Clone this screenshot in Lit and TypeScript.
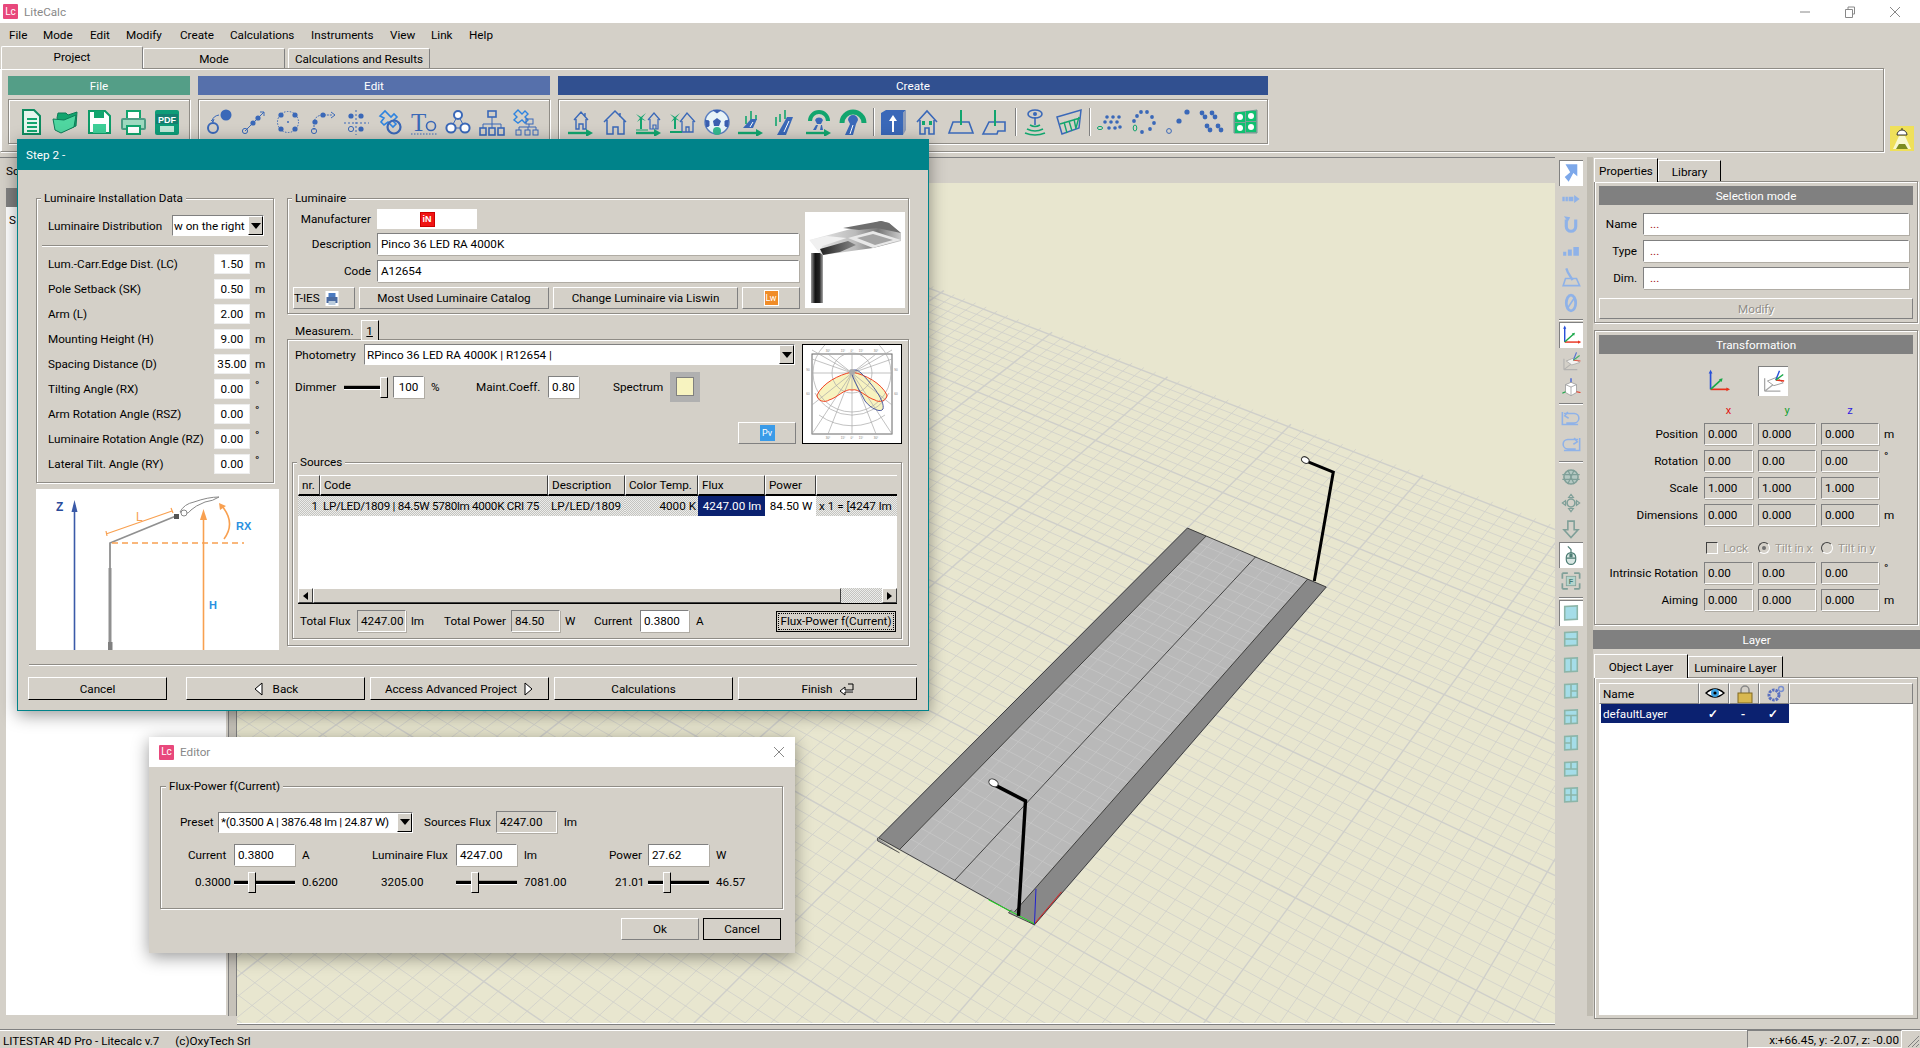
import { LitElement, html, css, svg } from "lit";
import { customElement } from "lit/decorators.js";

const B = "#3a68b8", G = "#12a56e", LB = "#8fb2e8", GY = "#7f9f98";

const H = (() => {
  const [Ax, Ay, Bx, By, Cx, Cy, Dx, Dy] = [879, 838, 1035, 925, 1327, 587, 1188, 528];
  const dx1 = Bx - Cx, dx2 = Dx - Cx, sx = Ax - Bx + Cx - Dx, dy1 = By - Cy, dy2 = Dy - Cy, sy = Ay - By + Cy - Dy;
  const den = dx1 * dy2 - dx2 * dy1;
  const g = (sx * dy2 - dx2 * sy) / den, h = (dx1 * sy - sx * dy1) / den;
  const a = Bx - Ax + g * Bx, b = Dx - Ax + h * Dx, d = By - Ay + g * By, e = Dy - Ay + h * Dy;
  return (u: number, v: number) => {
    const w = g * u + h * v + 1;
    return [(a * u + b * v + Ax) / w, (d * u + e * v + Ay) / w];
  };
})();
const pt = (u: number, v: number) => H(u, v).map((n) => n.toFixed(1)).join(",");
const poly = (pts: number[][]) => pts.map(([u, v]) => pt(u, v)).join(" ");
const VMAX = 1.44, VMIN = -1.3;
const gridLines = (() => {
  const out: any[] = [];
  for (let i = -90; i <= 110; i++) {
    const u = i / 10;
    const [x1, y1] = H(u, VMIN), [x2, y2] = H(u, VMAX);
    out.push(svg`<line x1=${x1} y1=${y1} x2=${x2} y2=${y2} stroke-width=${i % 10 === 0 ? 1.4 : 0.8}/>`);
  }
  for (let i = -46; i <= 50; i++) {
    const v = i / 35;
    const [x1, y1] = H(-9, v), [x2, y2] = H(11, v);
    out.push(svg`<line x1=${x1} y1=${y1} x2=${x2} y2=${y2} stroke-width=${i % 10 === 0 ? 1.4 : 0.8}/>`);
  }
  return out;
})();
const roadGrid = (() => {
  const out: any[] = [];
  for (let i = 2; i < 9; i++) {
    const [x1, y1] = H(i / 10, 0), [x2, y2] = H(i / 10, 1);
    out.push(svg`<line x1=${x1} y1=${y1} x2=${x2} y2=${y2}/>`);
  }
  for (let i = 1; i < 35; i++) {
    const [x1, y1] = H(0.14, i / 35), [x2, y2] = H(0.87, i / 35);
    out.push(svg`<line x1=${x1} y1=${y1} x2=${x2} y2=${y2}/>`);
  }
  return out;
})();

const ic = (body: any) => html`<svg class="ic" viewBox="0 0 28 28">${body}</svg>`;
const ringDots = (pts: number[][], r = 2.4, c = B) => pts.map(([x, y]) => svg`<circle cx=${x} cy=${y} r=${r} fill=${c}/>`);
const arrowG = svg`<path d="M1 25h20" stroke=${G} stroke-width="2.4" fill="none"/><path d="M19 21l7 4-7 4z" fill=${G}/>`;
const houseP = "M7 12L14 4l7 8M9 11v10h3v-5h4v5h3V11M18 5v3";
const palm = svg`<path d="M6 9v12" stroke=${G} stroke-width="2"/><path d="M1 6l5 3 5-4-4 5 4 3-5-2-4 3 3-4z" fill=${G}/>`;
const tunnel = svg`<path d="M5 13a9 9 0 1 1 18 0" fill="none" stroke=${G} stroke-width="4"/><path d="M10 12a4.5 4.5 0 0 1 8 0l-2 4h-4z" fill=${B}/>`;

const fileIcons = [
  ic(svg`<path d="M6 2h11l6 6v18H6z" fill="#e6f6ee" stroke="#0e8c60" stroke-width="2"/><path d="M10 11h10M10 15h10M10 19h10M10 23h10" stroke=${G} stroke-width="2"/>`),
  ic(svg`<path d="M6 10l1-5 8 0 2 2 9-3-1 14-15 6z" fill=${G} stroke="#0e7c58"/><path d="M2 11l11 1 12-5-2 12-13 6-6-3z" fill="#4fd6a0" stroke="#0e7c58"/>`),
  ic(svg`<path d="M4 3h16l5 5v17H4z" fill="#fff" stroke="#0e9c68" stroke-width="2"/><rect x="9" y="3" width="10" height="7" fill=${G}/><rect x="8" y="16" width="13" height="9" fill="#3ecf98"/>`),
  ic(svg`<rect x="8" y="3" width="13" height="8" fill="#fff" stroke=${G} stroke-width="2"/><rect x="3" y="11" width="23" height="10" rx="1" fill="#9dd9bf" stroke="#4d9d84" stroke-width="2"/><rect x="8" y="18" width="13" height="8" fill="#fff" stroke=${G} stroke-width="2"/>`),
  ic(svg`<rect x="2" y="2" width="24" height="25" rx="2" fill="#0e9c78"/><rect x="3" y="6" width="22" height="10" fill="#157e70"/><text x="14" y="14.5" font-size="9" font-weight="700" font-family="Liberation Sans" fill="#fff" text-anchor="middle">PDF</text><rect x="7" y="18" width="14" height="6" fill="#bfe8d8"/>`),
];
const editIcons = [
  ic(svg`<circle cx="20" cy="7" r="5.5" fill=${B}/><circle cx="7" cy="20" r="5" fill="none" stroke=${B} stroke-width="2"/><path d="M6 13q1-5 7-6M5 12l2 2 1-3" fill="none" stroke=${B}/>`),
  ic(svg`<path d="M5 23L24 4" stroke=${B}/>${ringDots([[13, 15], [18, 10]], 2.6)}<circle cx="5" cy="23" r="2.6" fill="none" stroke=${B}/><path d="M20 4h4v4" stroke="${B}" fill="none"/>`),
  ic(svg`<circle cx="14" cy="14" r="10.5" fill="none" stroke=${B} stroke-dasharray="1.5 1.5"/>${ringDots([[7, 7], [21, 7], [21, 21], [7, 21]], 2.6)}<circle cx="14" cy="14" r="1" fill=${B}/>`),
  ic(svg`<path d="M6 22v-6q0-8 8-9h10" fill="none" stroke=${B} stroke-dasharray="2 1"/>${ringDots([[7, 14], [15, 7]], 2.6)}<circle cx="6" cy="23" r="2.6" fill="none" stroke=${B}/><path d="M23 4l4 3-4 3" fill="none" stroke=${B}/>`),
  ic(svg`<path d="M14 2v25M2 15h25" stroke=${B} stroke-dasharray="2 2"/>${ringDots([[9, 8], [19, 8], [19, 21]], 2.6)}<circle cx="9" cy="21" r="2.6" fill="none" stroke=${B}/>`),
  ic(svg`<path d="M4 8l5-5 6 6 3-3 3 3-4 4 3 3-3 3-5-5-4 3-3-3 3-4z" fill="none" stroke="#2e84e0" stroke-width="1.6"/><circle cx="18" cy="19" r="6.5" fill="none" stroke=${B} stroke-width="2.2"/>`),
  ic(svg`<text x="1" y="23" font-size="25" font-family="Liberation Serif" fill=${B}>T</text><circle cx="21" cy="18" r="4.5" fill="none" stroke=${B} stroke-width="1.6"/><path d="M1 26h26" stroke=${B} stroke-dasharray="1.5 1.5"/>`),
  ic(svg`<path d="M14 7L7 20h14z" fill="none" stroke=${B}/><circle cx="14" cy="7" r="4" fill="#fff" stroke=${B} stroke-width="2"/><circle cx="7" cy="20" r="4.6" fill="#fff" stroke=${B} stroke-width="2"/><circle cx="21" cy="20" r="4.6" fill="#fff" stroke=${B} stroke-width="2"/>`),
  ic(svg`<path d="M14 9v6M5 20v-4h18v4M14 15v5" stroke=${B} fill="none"/><rect x="10" y="3" width="8" height="6" fill="none" stroke=${B} stroke-width="1.6"/><rect x="2" y="20" width="6" height="7" fill="none" stroke=${B} stroke-width="1.6"/><rect x="11" y="20" width="6" height="7" fill="none" stroke=${B} stroke-width="1.6"/><rect x="20" y="20" width="6" height="7" fill="none" stroke=${B} stroke-width="1.6"/>`),
  ic(svg`<path d="M2 6l4-4 4 4 3-3 3 3-3 3 3 3-3 3-3-3-4 3-4-3 3-3z" fill="none" stroke="#2e84e0" stroke-width="1.4"/><rect x="14" y="11" width="7" height="5" fill="none" stroke=${B}/><path d="M17 16v3M7 22v-3h17v3M16 19v3" stroke=${B} fill="none"/><rect x="4" y="22" width="5" height="5" fill="none" stroke=${B}/><rect x="13" y="22" width="5" height="5" fill="none" stroke=${B}/><rect x="21" y="22" width="5" height="5" fill="none" stroke=${B}/>`),
];
const createIcons = [
  ic(svg`<path d=${houseP} fill="none" stroke=${B} stroke-width="1.4"/>${arrowG}`),
  ic(svg`<path d="M3 14L14 3l11 11M6 12v14h6v-7h5v7h6V12M19 5v4" fill="none" stroke=${B} stroke-width="1.5"/>`),
  ic(svg`${palm}<path d="M13 12l6-7 6 7M15 11v10h8V11M18 21v-4h3v4" fill="none" stroke=${B} stroke-width="1.2"/><path d="M1 22h12" stroke=${G}/>${arrowG}`),
  ic(svg`${palm}<path d="M11 14l7-9 8 9M13 13v11h11V13M17 24v-5h3v5" fill="none" stroke=${B} stroke-width="1.3"/><path d="M1 24h12" stroke=${G} stroke-width="2"/>`),
  ic(svg`<circle cx="14" cy="14" r="12" fill="#e8f4f8" stroke="#5a7fc0" stroke-width="1.5"/><path d="M14 10l4 3-2 5h-5l-1-5z" fill="#3a5fb0"/><path d="M10 2l4 3 4-3M2 12l4 1 0 5-3 1M26 12l-4 1 0 5 3 1" fill="#3a5fb0" stroke="#3a5fb0"/><circle cx="14" cy="23" r="4" fill="#35b890"/>`),
  ic(svg`<path d="M9 8v8M14 3v11M19 7v5" stroke=${G} stroke-width="1.6" fill="none"/><path d="M6 20l8-9h6l-4 9z" fill=${B}/><path d="M13 19l3-5" stroke="#fff"/>${arrowG}`),
  ic(svg`<path d="M5 9v9M9 6v8M14 2v9" stroke=${G} stroke-width="1.6" fill="none"/><path d="M16 9h6l-7 18H6z" fill=${B}/><path d="M13 24l5-11" stroke="#fff"/>`),
  ic(svg`${tunnel}<path d="M8 22l3-5h2l-2 5zM15 22l1-5h1l1 5" fill=${B}/>${arrowG}`),
  ic(svg`<path d="M3 15a11 11 0 1 1 22 0" fill="none" stroke=${G} stroke-width="5"/><path d="M9 12a5 5 0 0 1 10 0l-2 4-3 11H6l5-11z" fill=${B}/><path d="M11 26l3-9" stroke="#fff"/>`),
  ic(svg`<path d="M2 5l5-3h20l-3 3v22H2z" fill=${B}/><path d="M24 5l3-3v20l-3 5z" fill="#8c9bb8"/><path d="M13 24v-11h-3l4-6 4 6h-3v11z" fill="#fff"/>`),
  ic(svg`<path d="M4 14L14 3l10 11M7 12v14h5v-6h4v6h5V12" fill="none" stroke=${B} stroke-width="1.6"/><rect x="9" y="13" width="3" height="4" fill=${G}/><rect x="16" y="13" width="3" height="4" fill=${G}/>`),
  ic(svg`<path d="M6 14h16l4 11H2z" fill="none" stroke=${B} stroke-width="1.6"/><path d="M14 2v15" stroke=${G} stroke-width="2"/>`),
  ic(svg`<path d="M8 14h16v9h-7l-1 3H2z" fill="none" stroke=${B} stroke-width="1.6"/><path d="M14 2v16" stroke=${G} stroke-width="2"/>`),
  ic(svg`<ellipse cx="14" cy="6" rx="7" ry="4" fill="none" stroke=${B} stroke-width="1.6"/><circle cx="14" cy="6" r="2" fill=${B}/><path d="M14 9v8" stroke=${B} stroke-width="1.6"/><path d="M9 17q5 3 10 0M6 21q8 4 16 0M4 25q10 4 20 0" fill="none" stroke=${G} stroke-width="1.6"/>`),
  ic(svg`<path d="M2 9L26 2l-2 18-17 6z" fill="none" stroke=${B} stroke-width="1.5"/><path d="M5 16l20-6M9 14l3 11M14 13l3 10M19 11l2 10M24 9l-3 11" stroke=${G} stroke-width="1.4"/>`),
  ic(svg`${ringDots([[12, 9], [18, 9], [24, 9], [10, 14], [16, 14], [22, 14], [14, 20], [20, 20], [25, 19]], 1.8)}<ellipse cx="5" cy="20" rx="2.6" ry="1.6" fill="none" stroke=${G}/>`),
  ic(svg`${ringDots([[12, 4], [18, 4], [8, 8], [23, 9], [5, 13], [25, 15], [21, 21], [13, 24]], 1.9)}<ellipse cx="6" cy="20" rx="1.8" ry="3" fill="none" stroke=${G}/>`),
  ic(svg`${ringDots([[24, 4], [16, 13]], 2.6)}<circle cx="6" cy="23" r="2.4" fill="none" stroke=${B}/>`),
  ic(svg`${ringDots([[5, 5], [8, 9], [15, 5], [18, 9], [10, 18], [13, 22], [21, 18], [24, 22]], 2.4)}`),
  ic(svg`<path d="M3 5l23-3v23H3z" fill=${GY} stroke="#6a9d90"/>${[[9, 9], [20, 8], [9, 20], [20, 19]].map(([x, y]) => svg`<rect x=${x - 5} y=${y - 5} width="10" height="10" fill="#10c070"/><circle cx=${x} cy=${y} r="3" fill="#fff"/>`)}`),
];
const axes = svg`<path d="M6 23V5" stroke="#2850d8" stroke-width="1.8"/><path d="M4 6l2-4 2 4z" fill="#2850d8"/><path d="M6 23h18" stroke="#e8301c" stroke-width="1.8"/><path d="M23 21l4 2-4 2z" fill="#e8301c"/><path d="M6 23l11-10" stroke="#18a848" stroke-width="1.8"/><path d="M15 12l4-1-1 4z" fill="#18a848"/>`;
const axes2 = svg`<path d="M5 25V11M5 25h17M5 25l9-7" stroke="#a8a8a8" stroke-width="1.4" fill="none"/><path d="M8 14l10-4 7 6-10 3z" fill="#fff" stroke="#999"/><path d="M17 13L21 3" stroke="#2850d8" stroke-width="1.5"/><path d="M17 13l9 1" stroke="#e8301c" stroke-width="1.5"/><path d="M17 13l8-6" stroke="#18a848" stroke-width="1.5"/>`;
const split = (s: string) => ic(svg`<rect x="6" y="5" width="16" height="17" fill="#a5dde8" stroke="#8cb5a8" stroke-width="2" transform="skewY(-3) translate(0 1)"/><path d=${s} stroke="#8cb5a8" stroke-width="2" fill="none"/>`);
const vtool: any[] = [
  [ic(svg`<path d="M6 3h15v15l-5-4-6 11-5-6 7-6z" fill="#7da8ea" transform="translate(1 0)"/>`), true],
  [ic(svg`<path d="M3 11h3v6H3zM7 11h3v6H7zM11 11h6v6h-6zM18 9l7 5-7 5z" fill=${LB}/>`)],
  [ic(svg`<path d="M8 7v9a6 6 0 0 0 12 0V7" fill="none" stroke=${LB} stroke-width="4"/><path d="M5 3l8 1-3 6z" fill=${LB}/>`)],
  [ic(svg`<path d="M4 15h4v5H4zM10 12h5v8h-5zM17 9h7v11h-7z" fill=${LB}/>`)],
  [ic(svg`<path d="M8 3l2 5 6 10" stroke=${LB} stroke-width="3" fill="none"/><path d="M7 16h14l4 9H4z" fill="none" stroke=${LB} stroke-width="2"/>`)],
  [ic(svg`<ellipse cx="14" cy="14" rx="6" ry="10" fill="none" stroke=${LB} stroke-width="3.5"/><path d="M10 20l8-12" stroke=${LB} stroke-width="2"/>`)],
  "sep",
  [ic(axes), true],
  [ic(svg`<g opacity=".75">${axes2}</g>`)],
  [ic(svg`<path d="M14 3v6" stroke="#2850d8" stroke-width="1.5"/><path d="M7 11l7-3 7 3v10l-7 4-7-4z" fill="#fff" stroke="#999"/><path d="M7 11l7 3 7-3M14 14v11" stroke="#999" fill="none"/><path d="M21 20l5 1" stroke="#e8301c" stroke-width="1.5"/><path d="M7 20l-4 2" stroke="#18a848" stroke-width="1.5"/>`)],
  "sep",
  [ic(svg`<path d="M5 7h13a6 6 0 0 1 0 12H8M3 5v16h20" fill="none" stroke=${LB} stroke-width="2"/><path d="M10 5l-4 5 5 3" fill="none" stroke=${LB} stroke-width="2"/>`)],
  [ic(svg`<path d="M23 7H10a6 6 0 0 0 0 12h10M25 5v16H5" fill="none" stroke=${LB} stroke-width="2"/><path d="M18 5l4 5-5 3" fill="none" stroke=${LB} stroke-width="2"/>`)],
  "sep",
  [ic(svg`<circle cx="14" cy="14" r="9" fill="#b4c8c2" stroke=${GY} stroke-width="2"/><path d="M3 11h22M3 17h22M10 5l8 18M18 5l-8 18" stroke=${GY} stroke-width="1.6"/>`)],
  [ic(svg`<circle cx="14" cy="14" r="5" fill="none" stroke=${GY} stroke-width="2"/><path d="M14 3l3 4h-6zM14 25l3-4h-6zM3 14l4-3v6zM25 14l-4-3v6z" fill="none" stroke=${GY} stroke-width="1.5"/>`)],
  [ic(svg`<path d="M10 4h8v11h5L14 25 5 15h5z" fill="none" stroke=${GY} stroke-width="2"/>`)],
  [ic(svg`<rect x="8" y="11" width="12" height="15" rx="6" fill="#d8e6e2" stroke="#4d7d74" stroke-width="1.5"/><path d="M8 18h12M14 11V7L10 3" stroke="#4d7d74" fill="none" stroke-width="1.5"/><rect x="12" y="12" width="4" height="5" fill="#4d7d74"/>`), true],
  [ic(svg`<path d="M3 4h7M3 4v7M25 4h-7M25 4v7M3 24h7M3 24v-7M25 24h-7M25 24v-7" stroke=${GY} stroke-width="2.2"/><rect x="8" y="8" width="12" height="12" fill="#b4d4cc" stroke=${GY}/><text x="14" y="18" font-size="9" font-weight="700" font-family="Liberation Sans" fill="#4d7d74" text-anchor="middle">F</text>`)],
  "sep",
  [split(""), true],
  [split("M6 14h16")],
  [split("M14 6v16")],
  [split("M14 6v16M14 14h8")],
  [split("M6 12h16M14 12v10")],
  [split("M14 6v16M6 14h8")],
  [split("M6 14h16M14 6v8")],
  [split("M14 6v16M6 14h16")],
];

const logo = html`<span class="lc">Lc</span>`;

const instRows: [string, string, string][] = [
  ["Lum.-Carr.Edge Dist. (LC)", "1.50", "m"], ["Pole Setback (SK)", "0.50", "m"], ["Arm (L)", "2.00", "m"],
  ["Mounting Height (H)", "9.00", "m"], ["Spacing Distance (D)", "35.00", "m"], ["Tilting Angle (RX)", "0.00", "°"],
  ["Arm Rotation Angle (RSZ)", "0.00", "°"], ["Luminaire Rotation Angle (RZ)", "0.00", "°"], ["Lateral Tilt. Angle (RY)", "0.00", "°"],
];
const transRows: [string, string[], string][] = [
  ["Position", ["0.000", "0.000", "0.000"], "m"], ["Rotation", ["0.00", "0.00", "0.00"], "°"],
  ["Scale", ["1.000", "1.000", "1.000"], ""], ["Dimensions", ["0.000", "0.000", "0.000"], "m"],
];
const menus: [string, number][] = [["File", 34], ["Mode", 47], ["Edit", 36], ["Modify", 54], ["Create", 50], ["Calculations", 81], ["Instruments", 79], ["View", 41], ["Link", 38], ["Help", 40]];

@customElement("app-root")
export class AppRoot extends LitElement {
  static styles = css`
    :host { display: block; position: relative; width: 1920px; height: 1048px; overflow: hidden; background: #d4d0c8; font: 11.7px/16px "Roboto", "Liberation Sans", sans-serif; color: #000; }
    * { box-sizing: border-box; }
    .app { display: flex; flex-direction: column; height: 1048px; }
    .title { height: 23px; background: #fff; display: flex; align-items: center; padding: 0 3px 0 3px; color: #888; gap: 6px; flex: none; }
    .lc { display: inline-flex; width: 15px; height: 15px; background: #e8487c; color: #fff; font-size: 10px; align-items: center; justify-content: center; border-radius: 1px; flex: none; }
    .grow { flex: 1; }
    .title .winbtn { width: 45px; margin-left: -6px; height: 23px; display: flex; align-items: center; justify-content: center; }
    .winbtn svg { width: 12px; height: 12px; }
    .menu { height: 23px; display: flex; align-items: center; padding-left: 9px; flex: none; }
    .menu span { flex: none; }
    .tabs { height: 22px; display: flex; padding-left: 1px; align-items: flex-end; flex: none; position: relative; z-index: 1; }
    .tab { width: 142px; height: 20px; border: 1px solid #fff; border-right-color: #808080; border-bottom: 0; display: flex; align-items: center; justify-content: center; border-radius: 2px 2px 0 0; }
    .tab.on { height: 23px; margin-bottom: -1px; background: #d4d0c8; padding-bottom: 2px; }
    .tab.c { width: 142px; margin-left: 3px; }
    .top { height: 84px; flex: none; display: flex; }
    .ribbon { width: 1884px; border: 1px solid #8f8c86; box-shadow: inset 1px 1px 0 #fff, 1px 1px 0 #fff; border-left-color: #fff; display: flex; padding: 7px 0 0 7px; gap: 8px; }
    .rgroup { display: flex; flex-direction: column; gap: 4px; }
    .rhead { height: 19px; color: #fff; display: flex; align-items: center; justify-content: center; flex: none; }
    .rbox { height: 45px; border: 1px solid #8f8c86; box-shadow: inset 1px 1px 0 #fff, 1px 1px 0 #fff; display: flex; align-items: center; }
    .ic { width: 28px; height: 28px; display: block; }
    .cell34 { width: 34px; display: flex; justify-content: center; flex: none; }
    .vsep { width: 6px; height: 28px; flex: none; display: flex; justify-content: center; }
    .vsep::before { content: ""; width: 1px; background: #808080; box-shadow: 1px 0 #fff; }
    .lamp { width: 24px; height: 25px; margin: 58px 0 0 6px; background: #efe05a; display: flex; align-items: center; justify-content: center; }
    .lamp svg { width: 22px; height: 24px; }
    .work { flex: 1; display: flex; margin-top: 5px; min-height: 0; }
    .left { width: 228px; display: flex; flex-direction: column; padding: 0 2px 8px 6px; }
    .ltab { height: 26px; margin-left: -6px; padding: 5px 0 0 6px; border-top: 1px solid #808080; width: 60px; }
    .lbar { height: 19px; margin-top: 5px; background: #808080; flex: none; }
    .lwhite { flex: 1; background: #fff; padding: 5px 3px; }
    .splitter { width: 9px; margin-bottom: 7px; border-left: 1px solid #808080; border-right: 1px solid #808080; background: #c6c2b9; }
    .center { width: 1319px; display: flex; flex-direction: column; margin-right: 3px; }
    .chead { height: 26px; border-top: 1px solid #808080; flex: none; }
    .canvas { height: 840px; background: #e8e6cf; position: relative; overflow: hidden; box-shadow: 0 1px 0 #fff, 0 2px 0 #808080; }
    .canvas svg { position: absolute; inset: 0; width: 100%; height: 100%; }
    .gl line { stroke: #cfcfca; }
    .rg line { stroke: #c6c6c6; stroke-width: .8; }
    .vtool { width: 26px; padding-top: 3px; flex: none; }
    .vi { height: 26px; width: 24px; margin-left: 1px; display: flex; align-items: center; justify-content: center; }
    .vi .ic { width: 22px; height: 22px; }
    .vi.on { background: #fff; box-shadow: inset 1px 1px 0 #808080; }
    .vs { height: 6px; display: flex; align-items: center; padding: 0 1px; }
    .vs::before { content: ""; height: 1px; flex: 1; background: #808080; box-shadow: 0 1px #fff; }
    .vsplit { width: 6px; background: #c0bcb2; margin-bottom: 7px; margin-left: 3px; flex: none; }
    .right { width: 327px; flex: none; display: flex; flex-direction: column; }
    .ptabs { display: flex; height: 24px; flex: none; padding-left: 1px; align-items: flex-end; }
    .ptab { border: 1px solid #fff; border-bottom: 0; border-right: 1px solid #000; display: flex; align-items: center; justify-content: center; }
    .ptabs .first { height: 24px; margin-bottom: -1px; background: #d4d0c8; position: relative; }
    .ptabs .second { height: 21px; padding-top: 1px; }
    .pbox { margin: 0 2px 0 1px; border: 1px solid #8f8c86; box-shadow: inset 1px 1px 0 #fff, 1px 1px 0 #fff; padding: 4px 4px 0; flex: none; }
    .phead { height: 19px; background: #808080; color: #fff; display: flex; align-items: center; justify-content: center; flex: none; }
    .nrows { display: grid; grid-template-columns: 38px 266px; column-gap: 6px; row-gap: 5px; margin-top: 8px; align-items: center; }
    .lbl { text-align: right; white-space: nowrap; }
    .field { background: #fff; border: 1px solid; border-color: #808080 #fff #fff #808080; box-shadow: 1px 1px 0 #b0aca4; height: 22px; display: flex; align-items: center; padding-left: 3px; white-space: nowrap; overflow: hidden; }
    .field.ro { background: #d4d0c8; }
    .dots { color: #a01010; padding-left: 3px; }
    .btn { background: #d4d0c8; border: 1px solid; border-color: #fff #808080 #808080 #fff; display: flex; align-items: center; justify-content: center; gap: 6px; white-space: nowrap; }
    .dis { color: #8f8c86; text-shadow: 1px 1px 0 #fff; }
    .modify { height: 21px; margin: 9px 0 0; width: 314px; }
    .ticons { display: flex; height: 30px; margin-top: 12px; align-items: center; padding-left: 106px; }
    .ticons .ic { width: 26px; height: 26px; }
    .tsel { width: 30px; height: 30px; margin-left: 27px; background: #fff; display: flex; align-items: center; justify-content: center; box-shadow: inset 1px 1px 0 #808080; }
    .tgrid { display: grid; grid-template-columns: 100px 49px 58px 58px 30px; column-gap: 5px; row-gap: 5px; align-items: center; }
    .tgrid .lbl { margin-right: 1px; }
    .tgrid .field { background: #d4d0c8; padding-left: 3px; }
    .xyz { margin-top: 8px; margin-bottom: 5px; height: 14px; }
    .xyz span { text-align: center; font-size: 11px; line-height: 14px; }
    .deg { align-self: start; line-height: 12px; }
    .checks { height: 14px; margin: 14px 0 8px; display: grid; grid-template-columns: 100px 49px 58px 58px; column-gap: 5px; color: #9a968e; text-shadow: 1px 1px 0 #fff; align-items: center; }
    .chk { display: flex; align-items: center; gap: 5px; white-space: nowrap; }
    .box { width: 12px; height: 12px; background: #d4d0c8; border: 1px solid; border-color: #404040 #fff #fff #404040; flex: none; margin-left: 2px; }
    .rad { width: 12px; height: 12px; border-radius: 50%; border: 1px solid; border-color: #404040 #fff #fff #404040; flex: none; display: flex; align-items: center; justify-content: center; }
    .rad.on::before { content: ""; width: 4px; height: 4px; background: #707070; border-radius: 50%; }
    .layerh { margin-top: 5px; }
    .ltabs { height: 24px; margin-top: 4px; }
    .lbox { flex: none; height: 342px; margin: 0 2px 0 1px; border: 1px solid #8f8c86; box-shadow: inset 1px 1px 0 #fff; padding: 5px 4px 3px; }
    .list { background: #fff; height: 332px; }
    .lhead { display: grid; grid-template-columns: 100px 30px 30px 30px 1fr; height: 21px; }
    .lhead > div { background: #d4d0c8; border: 1px solid; border-color: #fff #808080 #808080 #fff; display: flex; align-items: center; padding-left: 3px; }
    .lhead svg { width: 20px; height: 18px; margin-left: 2px; }
    .lrow { display: grid; grid-template-columns: 97px 30px 30px 30px; width: 188px; margin-left: 2px; height: 19px; background: #0b2170; color: #fff; align-items: center; }
    .lrow span { text-align: center; font-weight: 700; }
    .lrow span:first-child { text-align: left; padding-left: 2px; font-weight: 400; }
    .status { height: 19px; margin-top: 6px; border-top: 1px solid #808080; box-shadow: inset 0 1px 0 #fff; display: flex; align-items: center; flex: none; padding: 3px 0 0 3px; }
    .status .s2 { margin-left: 16px; }
    .sright { width: 155px; margin-top: -3px; height: 18px; border: 1px solid; border-color: #808080 #fff #fff #808080; text-align: right; padding-right: 2px; line-height: 18px; }
    .gripw { width: 18px; height: 18px; margin-top: -3px; flex: none; }
    .win { position: absolute; background: #d4d0c8; box-shadow: 0 4px 16px rgba(0,0,0,.4); }
    .step { left: 17px; top: 139px; width: 912px; height: 572px; border: 1px solid #00838a; border-top: 0; }
    .stitle { height: 31px; background: #00838a; color: #fff; display: flex; align-items: center; padding-left: 9px; margin: 0 -1px; }
    .sbody { display: flex; padding: 20px 0 0 18px; height: 476px; }
    .group { border: 1px solid #8f8c86; box-shadow: inset 1px 1px 0 #fff, 1px 1px 0 #fff; margin: 0; padding: 0; min-width: 0; }
    .group legend { margin-left: 5px; padding: 0 3px; background: #d4d0c8; line-height: 16px; }
    .gi { width: 238px; height: 293px; padding: 0 0 0 11px; }
    .gi legend { margin-left: -7px; }
    .dist { display: flex; height: 21px; margin-top: 9px; align-items: center; }
    .dist .lb { width: 124px; white-space: nowrap; }
    .select { background: #fff; border: 1px solid; border-color: #808080 #fff #fff #808080; display: flex; height: 21px; align-items: stretch; overflow: hidden; white-space: nowrap; }
    .select .tx { flex: 1; overflow: hidden; padding-left: 1px; display: flex; align-items: center; }
    .ar { width: 15px; background: #d4d0c8; border: 1px solid; border-color: #fff #000 #000 #fff; display: flex; align-items: center; justify-content: center; flex: none; }
    .ar::before { content: ""; border: 5px solid transparent; border-top: 6px solid #000; border-bottom: 0; }
    .hr { height: 1px; background: #8f8c86; box-shadow: 0 1px #fff; }
    .gi .hr { margin: 9px 5px 8px -6px; }
    .irow { display: grid; grid-template-columns: 166px 36px 1fr; height: 20px; margin-bottom: 5px; align-items: center; white-space: nowrap; }
    .irow .field { height: 20px; padding-left: 0; justify-content: center; box-shadow: none; border: 1px solid #eee; }
    .irow .u { padding-left: 5px; }
    .diagram { display: block; width: 243px; height: 161px; background: #fff; margin-top: 6px; }
    .colr { margin-left: 8px; width: 622px; }
    .gl2 { height: 124px; width: 622px; padding: 0 0 0 5px; }
    .gl2 legend { margin-left: -1px; }
    .lumi { display: flex; }
    .lform { width: 507px; }
    .lrow2 { display: grid; grid-template-columns: 78px 422px; column-gap: 6px; align-items: center; margin-bottom: 5px; }
    .lrow2.m { margin-top: 3px; margin-bottom: 4px; }
    .maker { background: #fff; width: 100px; height: 20px; display: flex; align-items: center; justify-content: center; }
    .in { width: 15px; height: 15px; background: #f01414; color: #fff; font: 700 9px/13px "Liberation Sans", sans-serif; text-align: center; border: 1px solid #c00; }
    .lbtns { display: flex; gap: 4px; height: 22px; }
    .ties { width: 62px; gap: 5px; justify-content: flex-start; }
    .lphoto { width: 100px; height: 96px; margin: 6px 0 0 5px; background: #fff; display: block; }
    .mtabs { display: flex; height: 25px; padding: 5px 0 0 8px; align-items: flex-end; }
    .mtab1 { width: 18px; height: 20px; margin-left: 7px; margin-bottom: -1px; border: 1px solid #fff; border-right-color: #000; border-bottom: 0; display: flex; align-items: center; justify-content: center; text-decoration: underline; background: #d4d0c8; position: relative; }
    .mbox { height: 307px; width: 622px; border: 1px solid #8f8c86; box-shadow: inset 1px 1px 0 #fff, 1px 1px 0 #fff; padding: 4px 0 0 4px; }
    .mtop { display: flex; }
    .mleft { width: 504px; padding-left: 3px; }
    .prow { display: flex; height: 21px; align-items: center; }
    .prow .lb { width: 69px; }
    .prow .select { width: 431px; }
    .drow { display: flex; align-items: center; height: 22px; margin-top: 11px; white-space: nowrap; }
    .slider { position: relative; height: 22px; flex: none; display: flex; align-items: center; }
    .slider::before { content: ""; flex: 1; height: 3px; border-top: 1px solid #a8a49c; border-bottom: 1px solid #fff; background: #000; }
    .thumb { position: absolute; top: 1px; height: 21px; width: 8px; background: #d4d0c8; border: 1px solid; border-color: #fff #000 #000 #fff; }
    .swatch { width: 30px; height: 30px; background: #b0b0b0; padding: 5px 6px 6px; flex: none; }
    .swatch i { display: block; width: 18px; height: 19px; background: #f7f3c0; border: 1px solid #808080; }
    .pv { width: 58px; height: 22px; margin: 24px 0 0 443px; }
    .pvi { width: 15px; height: 16px; background: #3a9be8; color: #fff; font-size: 9px; display: flex; align-items: center; justify-content: center; }
    .pvo { background: #f08c28; border: 1px solid #fff; }
    .polar { width: 100px; height: 100px; margin-left: 6px; border: 1px solid #000; background: #fff; display: block; flex: none; }
    .gs { width: 610px; height: 185px; margin-top: 10px; padding: 0 0 0 5px; }
    .gs legend { margin-left: -1px; }
    .tbl { width: 599px; height: 113px; margin-top: 5px; background: #fff; overflow: hidden; }
    .tr { display: grid; grid-template-columns: 22px 228px 77px 73px 67px 51px 81px; }
    .th { height: 21px; border: 1px solid; border-color: #fff #404040 #000 #fff; border-bottom-width: 2px; background: #d4d0c8; padding-left: 3px; display: flex; align-items: center; white-space: nowrap; }
    .th:last-child { border-right: 0; }
    .td { height: 20px; display: flex; align-items: center; padding: 0 2px 0 3px; white-space: nowrap; overflow: hidden; background: repeating-conic-gradient(#c4c4c0 0 25%, #ececea 0 50%) 0 0/2px 2px; }
    .td.r { justify-content: flex-end; }
    .td.sel { background: #0b2170; color: #fff; justify-content: center; }
    .td.w { background: #fff; justify-content: center; }
    .tight { letter-spacing: -.3px; }
    .scroll { display: flex; width: 599px; height: 16px; border-bottom: 1px solid #000; background: repeating-conic-gradient(#c4c4c0 0 25%, #ececea 0 50%) 0 0/2px 2px; }
    .sb { width: 15px; background: #d4d0c8; border: 1px solid; border-color: #fff #404040 #404040 #fff; display: flex; align-items: center; justify-content: center; }
    .sb.l::before { content: ""; border: 4px solid transparent; border-right: 5px solid #000; border-left: 0; }
    .sb.r::before { content: ""; border: 4px solid transparent; border-left: 5px solid #000; border-right: 0; }
    .sth { width: 528px; background: #d4d0c8; border: 1px solid; border-color: #fff #404040 #404040 #fff; }
    .sp { flex: 1; }
    .totals { display: flex; height: 22px; align-items: center; margin-top: 6px; padding-left: 2px; white-space: nowrap; }
    .totals .field { width: 49px; }
    .focus { width: 120px; height: 21px; border: 1px solid #000; outline: 1px dotted #000; outline-offset: -3px; }
    .sfoot { padding: 18px 11px 0 10px; }
    .sfoot .hr { margin: 0 0 0 1px; }
    .fbtns { display: flex; gap: 5px; margin-top: 12px; }
    .fbtns .btn { height: 23px; width: 179px; border-color: #fff #000 #000 #fff; }
    .fbtns .btn:first-child { width: 139px; margin-right: 14px; }
    .fbtns svg { width: 11px; height: 14px; }
    .fbtns svg.ret { width: 15px; }
    .editor { left: 149px; top: 737px; width: 646px; height: 216px; }
    .etitle { height: 30px; background: #fff; color: #888; display: flex; align-items: center; padding: 0 10px; gap: 6px; }
    .egroup { width: 623px; height: 131px; margin: 11px 0 0 11px; padding: 0; }
    .er1 { display: flex; align-items: center; height: 22px; margin-top: 17px; white-space: nowrap; }
    .er2 { display: flex; align-items: center; height: 22px; margin-top: 11px; white-space: nowrap; }
    .er3 { display: flex; align-items: center; height: 22px; margin-top: 5px; white-space: nowrap; }
    .cell { flex: none; }
    .ebtns { display: flex; justify-content: flex-end; gap: 4px; margin-top: 9px; padding-right: 14px; }
    .ebtns .btn { width: 78px; height: 22px; }
    .ebtns .k { border-color: #000; }
    .w31 { width: 31px; height: 22px; padding-left: 0; justify-content: center; }
    .w61 { width: 61px; }
    .w195 { width: 195px; }
    .pl2 { padding-left: 2px !important; }
  `;

  private slider(w: number, pos: number) {
    return html`<div class="slider" style="width:${w}px"><i class="thumb" style="left:${pos}px"></i></div>`;
  }
  private sp(w: number) {
    return html`<span class="cell" style="width:${w}px"></span>`;
  }
  private tx(w: number, t: string) {
    return html`<span class="cell" style="width:${w}px">${t}</span>`;
  }

  render() {
    return html`<div class="app">
      <div class="title">${logo}<span>LiteCalc</span><span class="grow"></span>
        <span class="winbtn"><svg viewBox="0 0 12 12"><path d="M1 6h10" stroke="#888"/></svg></span>
        <span class="winbtn"><svg viewBox="0 0 12 12"><path d="M1.5 3.5h7v8h-7zM4 3V1h6.5v7H9" fill="none" stroke="#888"/></svg></span>
        <span class="winbtn"><svg viewBox="0 0 12 12"><path d="M1 1l10 10M11 1L1 11" stroke="#888"/></svg></span>
      </div>
      <div class="menu">${menus.map(([m, w]) => html`<span style="width:${w}px">${m}</span>`)}</div>
      <div class="tabs"><div class="tab on">Project</div><div class="tab">Mode</div><div class="tab c">Calculations and Results</div></div>
      <div class="top">
        <div class="ribbon">
          <div class="rgroup" style="width:182px"><div class="rhead" style="background:#549e87">File</div><div class="rbox" style="padding-left:5px">${fileIcons.map((i) => html`<span class="cell34">${i}</span>`)}</div></div>
          <div class="rgroup" style="width:352px"><div class="rhead" style="background:#5670ab">Edit</div><div class="rbox" style="padding-left:4px">${editIcons.map((i) => html`<span class="cell34">${i}</span>`)}</div></div>
          <div class="rgroup" style="width:710px"><div class="rhead" style="background:#315090">Create</div><div class="rbox" style="padding-left:5px">${createIcons.map((i, n) => html`${n === 9 || n === 13 || n === 15 ? html`<span class="vsep"></span>` : ""}<span class="cell34">${i}</span>`)}</div></div>
        </div>
        <div class="lamp"><svg viewBox="0 0 22 24"><path d="M8 9h6l6 13H2z" fill="#f8f8d0"/><path d="M5 22l3-5h6l3 5z" fill="#7c8c20"/><path d="M6 8a5 5 0 0 1 10 0z" fill="#fff" stroke="#333"/><path d="M11 1v2" stroke="#333"/></svg></div>
      </div>
      <div class="work">
        <div class="left"><div class="ltab">Sc</div><div class="lbar"></div><div class="lwhite">S</div></div>
        <div class="splitter"></div>
        <div class="center">
          <div class="chead"></div>
          <div class="canvas">
            <svg viewBox="237 183 1319 840">
              <g class="gl">${gridLines}</g>
              <polygon points=${poly([[0.14, 0], [0.87, 0], [0.87, 1], [0.14, 1]])} fill="#b9b9b9"/>
              <g class="rg">${roadGrid}</g>
              <polygon points=${poly([[0, 0], [0.14, 0], [0.14, 1], [0, 1]])} fill="#888" stroke="#222" stroke-width=".8"/>
              <polygon points=${poly([[0.87, 0], [1, 0], [1, 1], [0.87, 1]])} fill="#888" stroke="#222" stroke-width=".8"/>
              <path d="M${pt(0.14, 0)}L${pt(0.87, 0)}M${pt(0.14, 1)}L${pt(0.87, 1)}M${pt(0.5, 0)}L${pt(0.5, 1)}" stroke="#222" stroke-width=".8" fill="none"/>
              <path d="M878 838l0 3 22 12M1012 910l-3 3 26 12" stroke="#333" stroke-width=".8" fill="#999"/>
              <path d="M989 900l46 24" stroke="#20e020" stroke-width="1"/><path d="M1035 924l27-32" stroke="#e02020" stroke-width="1"/><path d="M1035 924l1.5-35" stroke="#2020d0" stroke-width="1"/>
              <path d="M1019 916L1026 801L995 785" stroke="#000" stroke-width="3.4" fill="none"/>
              <path d="M1315 581L1334 472L1307 461" stroke="#000" stroke-width="3" fill="none"/>
              <ellipse cx="994" cy="783" rx="5" ry="3.4" fill="#fff" stroke="#333" transform="rotate(30 994 783)"/>
              <ellipse cx="1306" cy="460" rx="4" ry="3" fill="#fff" stroke="#333" transform="rotate(30 1306 460)"/>
            </svg>
          </div>
        </div>
        <div class="vtool">${vtool.map((v) => (v === "sep" ? html`<div class="vs"></div>` : html`<div class="vi ${v[1] ? "on" : ""}">${v[0]}</div>`))}</div>
        <div class="vsplit"></div>
        <div class="right">
          <div class="ptabs"><div class="ptab first" style="width:64px">Properties</div><div class="ptab second" style="width:63px">Library</div></div>
          <div class="pbox" style="height:142px">
            <div class="phead">Selection mode</div>
            <div class="nrows">
              <span class="lbl">Name</span><div class="field"><span class="dots">...</span></div>
              <span class="lbl">Type</span><div class="field"><span class="dots">...</span></div>
              <span class="lbl">Dim.</span><div class="field"><span class="dots">...</span></div>
            </div>
            <div class="btn modify dis">Modify</div>
          </div>
          <div class="pbox" style="height:295px;margin-top:7px">
            <div class="phead">Transformation</div>
            <div class="ticons">${ic(axes)}<div class="tsel">${ic(axes2)}</div></div>
            <div class="tgrid xyz"><span></span><span style="color:#e01010">x</span><span style="color:#10a030">y</span><span style="color:#3020e0">z</span></div>
            <div class="tgrid">
              ${transRows.map(([l, v, u]) => html`<span class="lbl">${l}</span>${v.map((x) => html`<div class="field">${x}</div>`)}<span class=${u === "°" ? "deg" : ""}>${u}</span>`)}
            </div>
            <div class="checks"><span></span><span class="chk"><i class="box"></i>Lock</span><span class="chk"><i class="rad on"></i>Tilt in x</span><span class="chk"><i class="rad"></i>Tilt in y</span></div>
            <div class="tgrid">
              <span class="lbl">Intrinsic Rotation</span>${["0.00", "0.00", "0.00"].map((x) => html`<div class="field">${x}</div>`)}<span class="deg">°</span>
              <span class="lbl">Aiming</span>${["0.000", "0.000", "0.000"].map((x) => html`<div class="field">${x}</div>`)}<span>m</span>
            </div>
          </div>
          <div class="phead layerh">Layer</div>
          <div class="ptabs ltabs"><div class="ptab first" style="width:94px">Object Layer</div><div class="ptab second" style="width:95px">Luminaire Layer</div></div>
          <div class="lbox"><div class="list">
            <div class="lhead"><div>Name</div>
              <div><svg viewBox="0 0 20 18"><path d="M1 8q9-8 18 0q-9 8-18 0z" fill="#fff" stroke="#000" stroke-width="1.4"/><circle cx="10" cy="8" r="4" fill="#3aa0e0"/><circle cx="10" cy="8" r="1.6" fill="#000"/></svg></div>
              <div><svg viewBox="0 0 20 18"><path d="M6 8V5a4 4 0 0 1 8 0v3" fill="none" stroke="#888" stroke-width="1.5"/><rect x="3" y="8" width="14" height="10" fill="#d8b850" stroke="#806820"/></svg></div>
              <div><svg viewBox="0 0 20 18"><circle cx="9" cy="10" r="5" fill="none" stroke="#5a70c0" stroke-width="3" stroke-dasharray="2.5 1"/><circle cx="16" cy="4" r="2.5" fill="none" stroke="#7a90d0" stroke-width="1.5"/></svg></div>
              <div></div></div>
            <div class="lrow"><span>defaultLayer</span><span>✓</span><span>-</span><span>✓</span></div>
          </div></div>
        </div>
      </div>
      <div class="status"><span>LITESTAR 4D Pro - Litecalc v.7</span><span class="s2">(c)OxyTech Srl</span><span class="grow"></span><div class="sright">x:+66.45, y: -2.07, z: -0.00</div><svg class="gripw" viewBox="0 0 18 18"><path d="M17 6L6 17M17 10L10 17M17 14L14 17" stroke="#808080"/></svg></div>
    </div>

    <div class="win step">
      <div class="stitle">Step 2 -</div>
      <div class="sbody">
        <div>
          <fieldset class="group gi"><legend>Luminaire Installation Data</legend>
            <div class="dist"><span class="lb">Luminaire Distribution</span><div class="select" style="width:92px"><span class="tx">w on the right</span><i class="ar"></i></div></div>
            <div class="hr"></div>
            ${instRows.map(([l, v, u]) => html`<div class="irow"><span>${l}</span><div class="field">${v}</div><span class="u ${u === "°" ? "deg" : ""}">${u}</span></div>`)}
          </fieldset>
          <svg class="diagram" viewBox="36 489 243 161">
            <text x="56" y="511" font-size="12" font-weight="700" font-family="Liberation Sans" fill="#2a4a9a">Z</text>
            <path d="M74.5 650V505" stroke="#3a5aa8" stroke-width="1.6"/><path d="M71.5 512L74.5 500l3 12z" fill="#3a5aa8"/>
            <path d="M110 650V543L176 516" stroke="#909090" stroke-width="1.8" fill="none"/><path d="M110 650V568" stroke="#909090" stroke-width="3"/><rect x="108" y="642" width="4.5" height="8" fill="#808080"/>
            <rect x="174" y="514" width="5" height="5" fill="#555"/>
            <path d="M180 512q4-8 14-10q14-5 25-5q-6 4-14 5q-10 4-14 8q-4 6-11 2z" fill="#fff" stroke="#888"/><circle cx="184" cy="513" r="3" fill="#fff" stroke="#888"/>
            <path d="M106 534L172 511M106 531l1 5M171 508l2 5" stroke="#f8a050" stroke-width="1.2" fill="none"/>
            <text x="136" y="521" font-size="12" font-family="Liberation Sans" fill="#f8a050">L</text>
            <path d="M112 543H244" stroke="#f8a050" stroke-width="1.4" stroke-dasharray="6 4" fill="none"/>
            <path d="M203.5 650V515" stroke="#f8a050" stroke-width="1.6"/><path d="M200 520l3.5-11 3.5 11z" fill="#f8a050"/>
            <path d="M224 539q12-16-2-33" stroke="#f8a050" stroke-width="1.6" fill="none"/><path d="M219 503l7 3-6 4z" fill="#f8a050"/>
            <text x="236" y="530" font-size="11" font-weight="700" font-family="Liberation Sans" fill="#2a90e0">RX</text>
            <text x="209" y="609" font-size="11" font-weight="700" font-family="Liberation Sans" fill="#2a90e0">H</text>
          </svg>
        </div>
        <div class="colr">
          <fieldset class="group gl2"><legend>Luminaire</legend>
            <div class="lumi">
              <div class="lform">
                <div class="lrow2 m"><span class="lbl">Manufacturer</span><div class="maker"><span class="in">iN</span></div></div>
                <div class="lrow2"><span class="lbl">Description</span><div class="field">Pinco 36 LED RA 4000K</div></div>
                <div class="lrow2"><span class="lbl">Code</span><div class="field">A12654</div></div>
                <div class="lbtns">
                  <div class="btn ties">T-IES<svg width="14" height="15" viewBox="0 0 13 15"><rect width="13" height="15" fill="#fff"/><path d="M3 2h7v4H3z" fill="#4a7ac0"/><path d="M1 6h11v6H1z" fill="#4a6aa0"/><path d="M3 10h7v4H3z" fill="#bcd"/></svg></div>
                  <div class="btn" style="width:190px">Most Used Luminaire Catalog</div>
                  <div class="btn" style="width:185px">Change Luminaire via Liswin</div>
                  <div class="btn" style="width:58px"><span class="pvi pvo">Lw</span></div>
                </div>
              </div>
              <svg class="lphoto" viewBox="0 0 100 96">
                <defs>
                  <linearGradient id="pl" x1="0" x2="1"><stop offset="0" stop-color="#999"/><stop offset=".35" stop-color="#111"/><stop offset=".7" stop-color="#222"/><stop offset="1" stop-color="#aaa"/></linearGradient>
                  <linearGradient id="hd" x1="0" x2="1"><stop offset="0" stop-color="#eee"/><stop offset=".5" stop-color="#bbb"/><stop offset=".75" stop-color="#777"/><stop offset="1" stop-color="#ccc"/></linearGradient>
                  <linearGradient id="ud" x1="0" x2="1"><stop offset="0" stop-color="#222"/><stop offset="1" stop-color="#888"/></linearGradient>
                </defs>
                <rect x="6" y="41" width="12" height="50" fill="url(#pl)"/>
                <path d="M4.5 28L76 9l8 2 12 10v8L68 36l-50 7-3-2z" fill="url(#hd)"/>
                <path d="M4.5 28l10 13 3-7 24-8-20-2z" fill="#f0f0f0"/>
                <path d="M15 37l28-8 8 4-16 7-17 3z" fill="url(#ud)"/>
                <path d="M43 26l25-7 28 9-28 8z" fill="#e8e8e8"/>
                <path d="M52 26l16-4 20 6-18 5z" fill="#a4a4a4"/>
                <path d="M38 16l38-7 8 2 12 10-24-5-18 2z" fill="#6e6e6e"/>
              </svg>
            </div>
          </fieldset>
          <div class="mtabs"><span>Measurem.</span><span class="mtab1">1</span></div>
          <div class="mbox">
            <div class="mtop">
              <div class="mleft">
                <div class="prow"><span class="lb">Photometry</span><div class="select"><span class="tx pl2">RPinco 36 LED RA 4000K | R12654 |</span><i class="ar"></i></div></div>
                <div class="drow">
                  ${this.tx(49, "Dimmer")}${this.slider(44, 36)}${this.sp(5)}<div class="field w31">100</div>${this.sp(7)}${this.tx(45, "%")}${this.tx(72, "Maint.Coeff.")}<div class="field w31">0.80</div>${this.sp(34)}${this.tx(57, "Spectrum")}<div class="swatch"><i></i></div>
                </div>
                <div class="btn pv"><span class="pvi">Pv</span></div>
              </div>
              <svg class="polar" viewBox="0 0 98 98">
                <path d="M49 27C35 30 20 38 14 50c0 6 8 8 12 5 8-2 16-12 23-10 7-2 15 8 23 10 4 3 12 1 12-5C78 38 63 30 49 27z" fill="#f7f3c0"/>
                <path d="M49 26c-2 4 8 20 13 30 6 8 16 12 18 8 2-8-10-24-22-36-3-3-7-4-9-2z" fill="#f7f3c0"/>
                <g fill="none" stroke="#a8a8a8" stroke-width=".7">
                  <rect x="9" y="9" width="80" height="80" stroke="#666" stroke-width="1"/>
                  <circle cx="49" cy="28" r="20"/><circle cx="49" cy="28" r="39"/><path d="M12 48a42 42 0 0 0 74 0M16 70a56 56 0 0 0 66 0"/>
                  <path d="M49 9V89M9 28H89M49 28L9 5M49 28L89 5M49 28L9 60M49 28L89 60M49 28L25 89M49 28L73 89M49 28L9 89M49 28L89 89M25 9L49 28L73 9M9 14L49 28L89 14"/>
                </g>
                <path d="M49 27C35 30 20 38 14 50c0 6 8 8 12 5 8-2 16-12 23-10 7-2 15 8 23 10 4 3 12 1 12-5C78 38 63 30 49 27z" fill="none" stroke="#f03010" stroke-width=".9"/>
                <path d="M49 26c-2 4 8 20 13 30 6 8 16 12 18 8 2-8-10-24-22-36-3-3-7-4-9-2z" fill="none" stroke="#3a4a9a" stroke-width=".9"/>
                <circle cx="49" cy="27" r="3" fill="#aaa"/>
                <g font-size="3" text-anchor="middle" fill="#777" font-family="Liberation Sans">
                  <text x="25" y="7">30°</text><text x="40" y="7">15°</text><text x="49" y="7">0°</text><text x="58" y="7">15°</text><text x="73" y="7">30°</text>
                  <text x="25" y="94">30°</text><text x="40" y="94">15°</text><text x="49" y="94">0°</text><text x="58" y="94">15°</text><text x="73" y="94">30°</text>
                  <text x="5" y="26">90</text><text x="93" y="26">90</text><text x="5" y="50">60</text><text x="93" y="50">60</text>
                </g>
              </svg>
            </div>
            <fieldset class="group gs"><legend>Sources</legend>
              <div class="tbl">
                <div class="tr">${["nr.", "Code", "Description", "Color Temp.", "Flux", "Power", ""].map((h) => html`<div class="th">${h}</div>`)}</div>
                <div class="tr"><div class="td r">1</div><div class="td tight">LP/LED/1809 | 84.5W 5780lm 4000K CRI 75</div><div class="td">LP/LED/1809</div><div class="td r">4000 K</div><div class="td sel">4247.00 lm</div><div class="td w">84.50 W</div><div class="td">x 1 = [4247 lm</div></div>
              </div>
              <div class="scroll"><div class="sb l"></div><div class="sth"></div><div class="sp"></div><div class="sb r"></div></div>
              <div class="totals">
                ${this.tx(57, "Total Flux")}<div class="field ro">4247.00</div>${this.sp(5)}${this.tx(33, "lm")}${this.tx(67, "Total Power")}<div class="field ro">84.50</div>${this.sp(5)}${this.tx(29, "W")}${this.tx(46, "Current")}<div class="field">0.3800</div>${this.sp(7)}${this.tx(80, "A")}<div class="btn focus">Flux-Power f(Current)</div>
              </div>
            </fieldset>
          </div>
        </div>
      </div>
      <div class="sfoot">
        <div class="hr"></div>
        <div class="fbtns">
          <div class="btn">Cancel</div>
          <div class="btn"><svg viewBox="0 0 11 14"><path d="M9 1L2 7l7 6z" fill="#fff" stroke="#000"/></svg>&nbsp;Back</div>
          <div class="btn">Access Advanced Project<svg viewBox="0 0 11 14"><path d="M2 1l7 6-7 6z" fill="#fff" stroke="#000"/></svg></div>
          <div class="btn">Calculations</div>
          <div class="btn">Finish<svg class="ret" viewBox="0 0 15 14"><path d="M14 2v6H6V5L1 9l5 4v-3h8" fill="#fff" stroke="#000"/><path d="M9 2h5" stroke="#000"/></svg></div>
        </div>
      </div>
    </div>

    <div class="win editor">
      <div class="etitle">${logo}<span>Editor</span><span class="grow"></span><svg width="12" height="12" viewBox="0 0 12 12"><path d="M1 1l10 10M11 1L1 11" stroke="#888"/></svg></div>
      <fieldset class="group egroup"><legend>Flux-Power f(Current)</legend>
        <div class="er1">
          ${this.sp(19)}${this.tx(38, "Preset")}<div class="select w195"><span class="tx pl2 tight">*(0.3500 A | 3876.48 lm | 24.87 W)</span><i class="ar"></i></div>${this.sp(11)}${this.tx(72, "Sources Flux")}<div class="field ro w61">4247.00</div>${this.sp(7)}<span>lm</span>
        </div>
        <div class="er2">
          ${this.sp(27)}${this.tx(46, "Current")}<div class="field w61">0.3800</div>${this.sp(7)}${this.tx(70, "A")}${this.tx(84, "Luminaire Flux")}<div class="field w61">4247.00</div>${this.sp(7)}${this.tx(85, "lm")}${this.tx(39, "Power")}<div class="field w61">27.62</div>${this.sp(7)}<span>W</span>
        </div>
        <div class="er3">
          ${this.sp(34)}${this.tx(39, "0.3000")}${this.slider(61, 14)}${this.sp(7)}${this.tx(79, "0.6200")}${this.tx(75, "3205.00")}${this.slider(61, 15)}${this.sp(7)}${this.tx(91, "7081.00")}${this.tx(33, "21.01")}${this.slider(61, 15)}${this.sp(7)}<span>46.57</span>
        </div>
      </fieldset>
      <div class="ebtns"><div class="btn">Ok</div><div class="btn k">Cancel</div></div>
    </div>`;
  }
}
